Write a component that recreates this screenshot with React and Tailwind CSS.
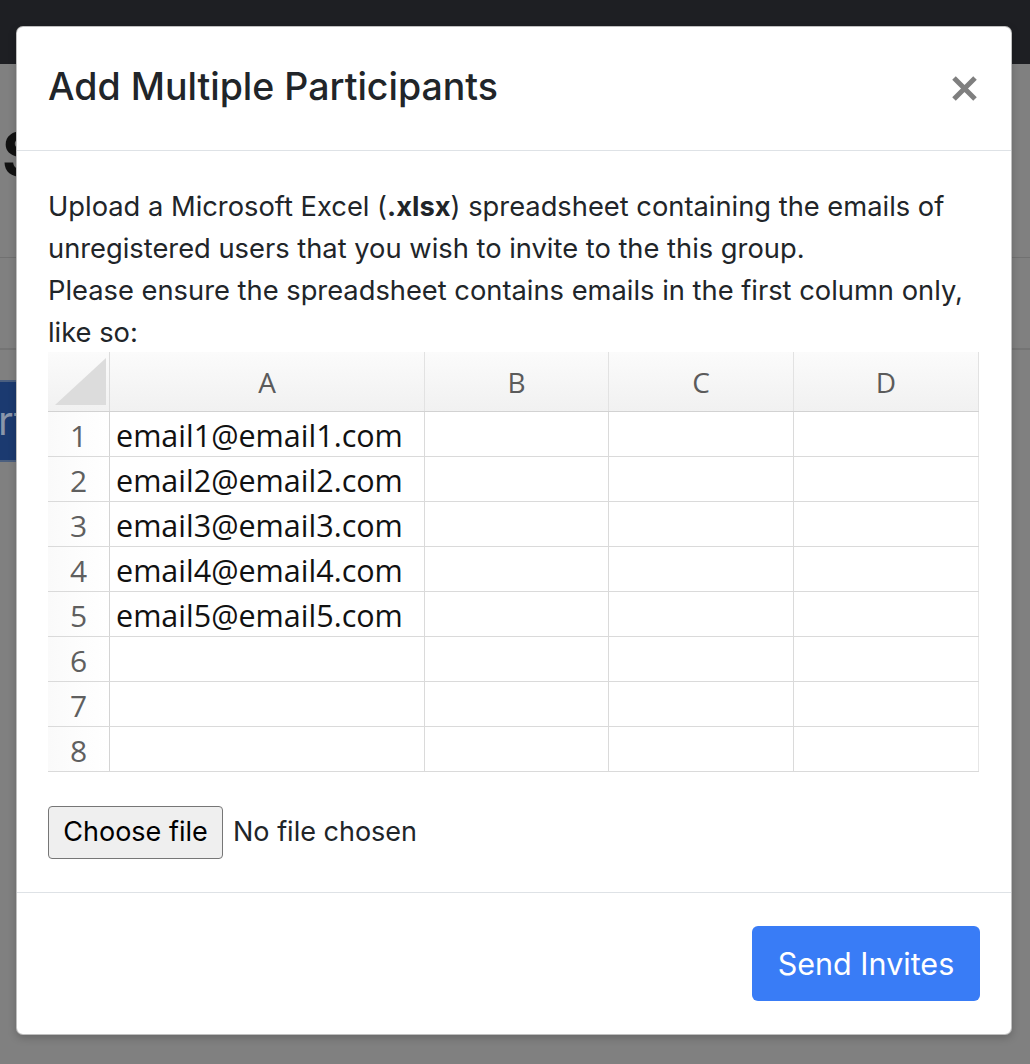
import React from 'react';

const columns = [
  { label: 'A', width: 'w-[315px]' },
  { label: 'B', width: 'w-[184px]' },
  { label: 'C', width: 'w-[185px]' },
  { label: 'D', width: 'w-[185px]' },
];

const rows = [
  'email1@email1.com',
  'email2@email2.com',
  'email3@email3.com',
  'email4@email4.com',
  'email5@email5.com',
  '',
  '',
  '',
];

function CloseIcon() {
  return (
    <svg width="25" height="25" viewBox="0 0 25 25" className="mr-[3px]">
      <path d="M2 2 L23 23 M23 2 L2 23" stroke="#7f7f7f" strokeWidth="5" fill="none" />
    </svg>
  );
}

function SheetPreview() {
  return (
    <div className="w-[931px] font-['Open_Sans',sans-serif] -mt-[2px]">
      {/* column headers */}
      <div className="flex h-[60px] bg-linear-to-b from-[#fbfbfb] to-[#f1f1f1] border-b border-[#d2d2d2]">
        <div className="relative w-[62px] border-r border-[#dcdcdc]">
          <svg width="62" height="60" className="absolute left-0 top-0">
            <polygon points="7,53 58,6 58,53" fill="#dcdcdc" />
          </svg>
        </div>
        {columns.map((c) => (
          <div
            key={c.label}
            className={`${c.width} flex items-center justify-center border-r border-[#e2e2e2] text-[28px] text-[#5b5b5b]`}
          >
            {c.label}
          </div>
        ))}
      </div>
      {/* rows */}
      {rows.map((email, i) => (
        <div key={i} className="flex h-[45px] border-b border-[#dadada]">
          <div className="w-[62px] flex items-center justify-center border-r border-[#d4d4d4] bg-linear-to-r from-[#fafafa] to-white pt-[3px] text-[30px] text-[#5f5f5f]">
            {i + 1}
          </div>
          <div className="w-[315px] flex items-center pl-[6px] pt-[3px] border-r border-[#dadada] text-[30.5px] text-[#111] whitespace-nowrap">
            {email}
          </div>
          <div className="w-[184px] border-r border-[#dadada]" />
          <div className="w-[185px] border-r border-[#dadada]" />
          <div className="w-[185px] border-r border-[#e6e6e6]" />
        </div>
      ))}
    </div>
  );
}

export default function App() {
  return (
    <div className="relative h-[1064px] overflow-hidden bg-[#808080] font-['Inter',sans-serif]">
      {/* page behind the backdrop */}
      <div className="h-16 bg-[#1e1f23]" />
      <div className="pt-[60px] pl-[2px]">
        <h1 className="text-[60px] font-bold leading-none text-[#111]">Sessions</h1>
      </div>
      <div className="mt-[73px] h-px bg-[#717171]" />
      <div className="mt-[90px] h-[2px] bg-[#747474]" />
      <div className="mt-[30px] flex h-[82px] w-[60px] items-center border-y-2 border-[#4b5f7f] bg-[#1b3a70] text-[40px] leading-none text-[#8a96aa]">
        <span className="-ml-[2px]">rt</span>
      </div>

      {/* modal */}
      <div className="absolute left-[16px] top-[26px] w-[996px] rounded-[7px] border border-black/25 bg-white shadow-[0_3px_8px_rgba(0,0,0,0.2)]">
        <div className="flex h-[124px] items-center justify-between border-b border-[#dee2e6] px-[31px]">
          <h2 className="-mt-[2px] text-[37.5px] font-medium leading-tight text-[#212529]">Add Multiple Participants</h2>
          <CloseIcon />
        </div>

        <div className="px-[31px] pt-[35px] pb-[33px] text-[#212529]">
          <p className="text-[27.3px] leading-[42px]">
            Upload a Microsoft Excel (<b className="font-bold">.xlsx</b>) spreadsheet containing the emails of
            unregistered users that you wish to invite to the this group.
            <br />
            Please ensure the spreadsheet contains emails in the first column only, like so:
          </p>
          <SheetPreview />

          <div className="mt-[34px] flex h-[53px] items-center">
            <div className="flex h-full w-[175px] items-center justify-center rounded-[4px] border border-[#767676] bg-[#efefef] text-[27px] text-black">
              Choose file
            </div>
            <span className="ml-[10px] text-[27px]">No file chosen</span>
          </div>
        </div>

        <div className="flex justify-end border-t border-[#dee2e6] px-[31px] py-[33px]">
          <button className="flex h-[75px] w-[228px] items-center justify-center rounded-[6px] bg-[#397cf6] text-[30.5px] text-white">
            Send Invites
          </button>
        </div>
      </div>
    </div>
  );
}
